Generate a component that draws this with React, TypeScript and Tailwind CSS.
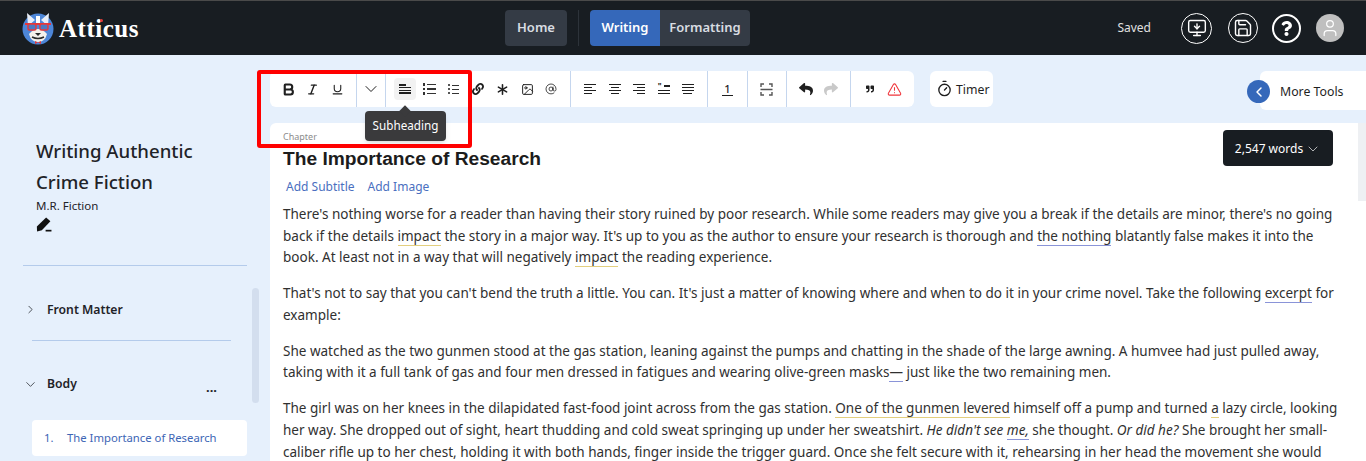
import { ReactNode } from "react";
import { Asterisk, AtSign, Bold, ChevronDown, ChevronLeft, ChevronRight, Image, Italic, MonitorDown, Save, Timer, TriangleAlert, Underline, User } from "lucide-react";
import { FaLink, FaQuoteRight, FaReply, FaShare, FaQuestion } from "react-icons/fa";

const font = "font-['Noto_Sans','Open_Sans',sans-serif]";

function Logo() {
  return (
    <svg width="32" height="34" viewBox="0 0 32 34">
      <circle cx="16" cy="18" r="15.5" fill="#4d86d8" />
      <path d="M6 15 L5 2 L13 9 Z M26 15 L27 2 L19 9 Z" fill="#e8eef8" />
      <path d="M14 5 h4 v9 h-4 Z" fill="#ffffff" />
      <path d="M7 23 Q16 13 25 23 Q23 31 16 31 Q9 31 7 23 Z" fill="#f4f1ec" />
      <rect x="3" y="12" width="26" height="2" fill="#e5383b" />
      <rect x="6" y="13" width="8" height="6" rx="1.5" fill="#4d78c0" stroke="#e5383b" strokeWidth="1.4" />
      <rect x="18" y="13" width="8" height="6" rx="1.5" fill="#4d78c0" stroke="#e5383b" strokeWidth="1.4" />
      <path d="M13 22 h6 l-3 3 Z" fill="#2a2a2a" />
      <path d="M10 26 Q16 29 22 26" stroke="#2a2a2a" strokeWidth="1.4" fill="none" />
      <path d="M13 30 l3 1.5 l3 -1.5 v3 l-3 -1.5 l-3 1.5 Z" fill="#e5383b" />
    </svg>
  );
}

function Tool({ children, active }: { children: ReactNode; active?: boolean }) {
  return (
    <div className={`h-[22px] flex items-center justify-center rounded-sm text-[#1f1f1f] ${active ? "w-[22px] mx-[1.2px] bg-[#f2f2f2]" : "w-[24.4px]"}`}>
      {children}
    </div>
  );
}

function Group({ children, last, className }: { children: ReactNode; last?: boolean; className?: string }) {
  return (
    <div className={`flex items-center h-full ${className ?? "px-[7px]"} ${last ? "" : "border-r border-[#c5d6ee]"}`}>
      {children}
    </div>
  );
}

function Lines({ n, align }: { n: number[]; align: "left" | "center" | "right" }) {
  const pos = align === "left" ? "items-start" : align === "center" ? "items-center" : "items-end";
  return (
    <div className={`flex flex-col gap-[1.6px] w-[12px] ${pos}`}>
      {n.map((w, i) => (
        <div key={i} className="h-[1.5px] bg-[#1f1f1f]" style={{ width: w }} />
      ))}
    </div>
  );
}

function BulletList({ numbered }: { numbered?: boolean }) {
  return (
    <div className="flex flex-col gap-[2px]">
      {[0, 1, 2].map((i) => (
        <div key={i} className="flex items-center gap-[2px]">
          <div className={numbered ? "w-[2px] h-[2px] bg-[#555]" : "w-[2.5px] h-[2.5px] bg-[#333]"} />
          <div className={numbered ? "w-[7px] h-px bg-[#333]" : "w-[9px] h-[1.3px] bg-[#333]"} />
        </div>
      ))}
    </div>
  );
}

function Mark({ c, children }: { c: "y" | "b"; children: ReactNode }) {
  return (
    <span className={`border-b ${c === "y" ? "border-[#e3cf7f]" : "border-[#8a94d8]"}`}>{children}</span>
  );
}

function Toolbar() {
  return (
    <div className="flex items-start pr-0 pt-4">
      <div className="flex items-center h-9 w-[644px] bg-white rounded-md">
        <Group className="px-[6.2px]">
          <Tool><Bold size={15} strokeWidth={3.4} /></Tool>
          <Tool><Italic size={13} strokeWidth={2.6} /></Tool>
          <Tool><Underline size={13} strokeWidth={2} /></Tool>
        </Group>
        <Group className="px-[2.2px]">
          <Tool><ChevronDown size={20} strokeWidth={1.2} /></Tool>
        </Group>
        <Group className="px-[6.6px]">
          <Tool active>
            <div className="flex flex-col gap-[1.3px] w-[12px]">
              <div className="h-[1.5px] w-[7px] bg-[#1f1f1f]" />
              <div className="h-[1.5px] bg-[#1f1f1f]" />
              <div className="h-[1.5px] bg-[#1f1f1f]" />
              <div className="h-[1.5px] bg-[#1f1f1f]" />
            </div>
          </Tool>
          <Tool><BulletList /></Tool>
          <Tool><BulletList numbered /></Tool>
          <Tool><FaLink size={12} /></Tool>
          <Tool><Asterisk size={19} strokeWidth={2} /></Tool>
          <Tool><Image size={13} strokeWidth={1.8} /></Tool>
          <Tool><AtSign size={12} strokeWidth={1.6} /></Tool>
        </Group>
        <Group>
          <Tool><Lines n={[12, 8, 12, 8]} align="left" /></Tool>
          <Tool><Lines n={[12, 8, 12, 8]} align="center" /></Tool>
          <Tool><Lines n={[12, 8, 12, 8]} align="right" /></Tool>
          <Tool>
            <div className="flex flex-col gap-[1.6px] w-[12px] items-end">
              <div className="flex gap-[2px] items-center">
                <span className="text-[8px] leading-[4px] font-bold text-[#1f1f1f]">"</span>
                <div className="h-[1.5px] w-[6px] bg-[#1f1f1f]" />
              </div>
              <div className="h-[1.5px] w-[12px] bg-[#1f1f1f]" />
              <div className="h-[1.5px] w-[12px] bg-[#1f1f1f]" />
            </div>
          </Tool>
          <Tool><Lines n={[12, 12, 12, 9]} align="center" /></Tool>
        </Group>
        <Group>
          <Tool><span className="text-[11px] leading-[12px] font-medium border-b border-[#1f1f1f] px-[2px]">1</span></Tool>
        </Group>
        <Group>
          <Tool>
            <svg width="13" height="13" viewBox="0 0 13 13" fill="none" stroke="#555" strokeWidth="1.4">
              <path d="M1 4V1h3M9 1h3V4M1 9v3h3M9 12h3V9M0.5 6.5h12" />
            </svg>
          </Tool>
        </Group>
        <Group>
          <Tool><FaReply size={14} /></Tool>
          <Tool><FaShare size={14} className="text-[#c9c9c9]" /></Tool>
        </Group>
        <Group last>
          <Tool><FaQuoteRight size={8} /></Tool>
          <Tool><TriangleAlert size={15} strokeWidth={1.7} className="text-[#f0353b]" /></Tool>
        </Group>
      </div>
      <div className="ml-4 flex items-center gap-[3px] h-9 w-[63px] px-[6px] bg-white rounded-md text-[12.3px] text-[#1f1f1f]">
        <Timer size={17} strokeWidth={1.9} className="shrink-0 -mt-[2px]" />
        <span className="pt-[2px]">Timer</span>
      </div>
      <div className="relative ml-auto h-[39px] w-[106px] bg-white rounded-l-md flex items-center pl-5 pt-[3px] text-[12.3px] text-[#1f1f1f]">
        <div className="absolute -left-[13px] top-[9px] w-[23px] h-[23px] rounded-full bg-[#3568ba] flex items-center justify-center text-white">
          <ChevronLeft size={16} strokeWidth={2.2} />
        </div>
        More Tools
      </div>
    </div>
  );
}

function Editor() {
  return (
    <div className="relative mt-[13px] flex-1 bg-white rounded-tl-md pl-[13px] pt-2 text-[#303030] overflow-hidden">
      <div className="absolute right-0 top-0 w-2 h-[78px] bg-[#eef0f3]" />
      <div className="absolute right-[33px] top-[7px] w-[110px] h-9 rounded bg-[#181d22] text-white text-[12px] pt-[1px] flex items-center justify-center gap-[2px]">
        2,547 words <ChevronDown size={16} strokeWidth={1} />
      </div>
      <div className="text-[9px] leading-[12px] text-[#8c8c8c]">Chapter</div>
      <h1 className="font-['Liberation_Sans',Arial,sans-serif] text-[19.2px] leading-[24px] font-bold text-[#1c1c1c] mt-[4px]">The Importance of Research</h1>
      <div className="flex gap-[13px] pl-[3px] mt-[6px] text-[12px] leading-[20px] text-[#4a6fc0]">
        <span>Add Subtitle</span>
        <span>Add Image</span>
      </div>
      <div className="mt-[7px] text-[13.53px] leading-[21.6px] whitespace-nowrap flex flex-col gap-[14.4px]">
        <p>
          There's nothing worse for a reader than having their story ruined by poor research. While some readers may give you a break if the details are minor, there's no going<br />
          back if the details <Mark c="y">impact</Mark> the story in a major way. It's up to you as the author to ensure your research is thorough and <Mark c="b">the nothing</Mark> blatantly false makes it into the<br />
          book. At least not in a way that will negatively <Mark c="y">impact</Mark> the reading experience.
        </p>
        <p>
          That's not to say that you can't bend the truth a little. You can. It's just a matter of knowing where and when to do it in your crime novel. Take the following <Mark c="b">excerpt</Mark> for<br />
          example:
        </p>
        <p>
          She watched as the two gunmen stood at the gas station, leaning against the pumps and chatting in the shade of the large awning. A humvee had just pulled away,<br />
          taking with it a full tank of gas and four men dressed in fatigues and wearing olive-green masks<Mark c="b">—</Mark> just like the two remaining men.
        </p>
        <p>
          The girl was on her knees in the dilapidated fast-food joint across from the gas station. <Mark c="y">One of the gunmen levered</Mark> himself off a pump and turned <Mark c="y">a</Mark> lazy circle, looking<br />
          her way. She dropped out of sight, heart thudding and cold sweat springing up under her sweatshirt. <em>He didn't see <Mark c="b">me,</Mark></em> she thought. <em>Or did he?</em> She brought her small-<br />
          caliber rifle up to her chest, holding it with both hands, finger inside the trigger guard. Once she felt secure with it, rehearsing in her head the movement she would
        </p>
      </div>
    </div>
  );
}

function Sidebar() {
  return (
    <aside className="relative w-[270px] shrink-0 pl-[23px] pr-[23px] pt-[80px] text-[#1f2328]">
      <div className="absolute left-[252px] top-[233px] w-[7px] h-[115px] rounded bg-[#d3deee]" />
      <div className="pl-[13px] pb-[32px] border-b border-[#b4cbeb]">
        <div className="text-[18.6px] leading-[31px] font-medium">Writing Authentic<br />Crime Fiction</div>
        <div className="text-[11.5px] leading-[16px] mt-[1px]">M.R. Fiction</div>
        <svg width="16" height="16" viewBox="0 0 15 15" className="mt-[3px]">
          <path d="M9.5 0.5 L13.5 4 L5.5 12.5 L1 13.5 L0.8 9 Z" fill="#111" />
          <rect x="9" y="12" width="5.5" height="1.6" fill="#111" />
        </svg>
      </div>
      <div className="ml-[9px] mr-[16px] h-[75px] border-b border-[#b4cbeb] flex items-start pt-[34px] gap-[9px] font-semibold text-[12.2px] leading-[20px]">
        <ChevronRight size={13} strokeWidth={1.4} className="-ml-[8px] mt-[3px]" />
        <span className="ml-[1px]">Front Matter</span>
      </div>
      <div className="ml-[3px] h-[79px] flex items-start pt-[33px] font-semibold text-[12.2px] relative">
        <ChevronDown size={15} strokeWidth={1.2} className="-ml-[3px] mt-[3px]" />
        <span className="ml-[9px] leading-[20px]">Body</span>
        <span className="absolute left-[180px] top-[38px] font-bold text-[13px] leading-[16px]">...</span>
      </div>
      <div className="ml-[9px] h-9 bg-white rounded flex items-center text-[11.3px] text-[#3d65b5]">
        <span className="w-[35px] pl-3">1.</span>
        <span>The Importance of Research</span>
      </div>
    </aside>
  );
}

export default function App() {
  return (
    <div className={`relative h-[461px] w-[1366px] overflow-hidden bg-[#e6f0fc] flex flex-col ${font}`}>
      <header className="h-[55px] shrink-0 bg-[#181d22] border-t border-[#4a4a4a] flex items-center text-white">
        <div className="flex items-center pl-[22px] w-[505px] gap-[5px]">
          <Logo />
          <div className="relative font-['Liberation_Serif',serif] text-[25px] font-bold leading-none tracking-[0.5px]">
            Atticus
            <span className="absolute left-[41px] top-[3px] w-[3px] h-[3px] rounded-full bg-[#e5383b]" />
          </div>
        </div>
        <div className="flex items-center text-[13px] font-semibold text-[#d9dde2]">
          <div className="w-[62px] h-9 rounded bg-[#343b45] flex items-center justify-center">Home</div>
          <div className="w-px h-9 bg-[#2d333a] mx-[11px]" />
          <div className="w-[70px] h-9 rounded-l bg-[#3568ba] text-white flex items-center justify-center">Writing</div>
          <div className="w-[90px] h-9 rounded-r bg-[#343b45] flex items-center justify-center">Formatting</div>
        </div>
        <div className="ml-auto flex items-center pr-[22px]">
          <span className="text-[12px] text-[#e0e0e0] mr-[30px]">Saved</span>
          <div className="w-[31px] h-[31px] rounded-full border border-white flex items-center justify-center"><MonitorDown size={20} strokeWidth={1.7} /></div>
          <div className="ml-[16px] w-[30px] h-[30px] rounded-full border-[1.5px] border-white flex items-center justify-center"><Save size={20} strokeWidth={1.7} /></div>
          <div className="ml-[14px] w-[29px] h-[29px] rounded-full border-[2.5px] border-white flex items-center justify-center"><FaQuestion size={15} /></div>
          <div className="ml-[15px] w-7 h-7 rounded-full bg-[#bfbfbf] flex items-center justify-center"><User size={20} strokeWidth={1.5} /></div>
        </div>
      </header>
      <main className="flex flex-1 min-h-0">
        <Sidebar />
        <div className="flex-1 min-w-0 flex flex-col">
          <Toolbar />
          <Editor />
        </div>
      </main>

      <div className="absolute left-[365px] top-[111px] w-[81px] h-[30px] rounded bg-[#3a3a3c] text-white text-[11.7px] flex items-center justify-center shadow-md">
        <span className="absolute -top-[4px] left-[36px] w-2 h-2 rotate-45 bg-[#3a3a3c]" />
        Subheading
      </div>
      <div className="absolute left-[257px] top-[70px] w-[215px] h-[78px] border-[4px] border-[#ff0000] rounded-[3px] pointer-events-none" />
    </div>
  );
}
